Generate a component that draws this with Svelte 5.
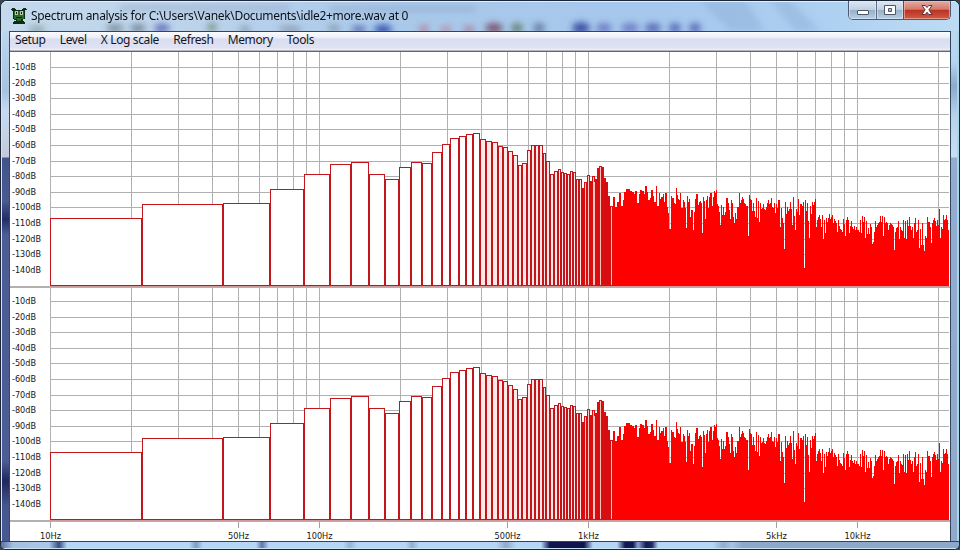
<script lang="ts">
  const menu = ["Setup", "Level", "X Log scale", "Refresh", "Memory", "Tools"];
  const channels = [0, 234];
  const levels = [10, 20, 30, 40, 50, 60, 70, 80, 90, 100, 110, 120, 130, 140];
  const freqLabels = [
    { f: 10, text: "10Hz", w: 21 },
    { f: 50, text: "50Hz", w: 21 },
    { f: 100, text: "100Hz", w: 26 },
    { f: 500, text: "500Hz", w: 26 },
    { f: 1000, text: "1kHz", w: 21 },
    { f: 5000, text: "5kHz", w: 21 },
    { f: 10000, text: "10kHz", w: 26 },
  ];

  // log scale, 269px per decade
  function fx(f: number) {
    return Math.floor(50.3 + 269 * Math.log10(f / 10));
  }

  function ly(db: number) {
    return Math.floor(51.9 + db * 1.56);
  }

  const gridX: number[] = [];
  for (let dec = 10; dec <= 10000; dec *= 10) {
    for (let i = 1; i < 10; i++) {
      if (dec * i <= 20000) gridX.push(fx(dec * i));
    }
  }

  // [left edge, top] of every bin that is wide enough for an outline
  const bins = [
    [50, 218], [142, 204], [223, 203], [270, 189], [304, 174], [330, 164], [351, 162], [369, 174],
    [385, 179], [399, 167], [411, 162], [422, 163], [432, 152], [442, 144], [450, 138], [459, 136],
    [466, 134], [473, 133], [480, 139], [486, 141], [492, 142], [498, 146], [503, 147], [508, 151],
    [513, 155], [518, 165], [522, 163], [527, 150], [531, 145], [535, 145], [539, 145], [543, 153],
    [546, 161], [550, 174], [554, 171], [558, 169], [561, 172], [564, 173], [567, 174], [570, 171],
    [573, 172], [576, 179], [579, 179], [582, 188], [584, 182], [587, 175], [590, 181], [592, 176],
    [595, 179], [597, 168], [599, 166], [602, 167], [604, 178], [606, 182], [608, 196], [610, 206],
    [613, 197],
  ];

  // one top per pixel column from x = 613
  const noise = [
    197, 197, 207, 207, 202, 202, 193, 193, 206, 206, 200, 192, 192, 189, 189, 189, 189, 191, 191, 192,
    192, 194, 191, 191, 203, 203, 194, 190, 190, 191, 191, 194, 186, 186, 192, 200, 200, 198, 190, 190,
    196, 202, 202, 186, 206, 206, 193, 199, 197, 197, 194, 202, 193, 193, 207, 213, 229, 229, 196, 198,
    198, 203, 204, 188, 195, 199, 200, 193, 208, 208, 200, 202, 208, 228, 196, 202, 199, 217, 210, 210,
    230, 212, 199, 194, 194, 205, 202, 201, 203, 233, 197, 201, 219, 200, 196, 208, 197, 193, 193, 206,
    197, 191, 193, 190, 204, 206, 212, 225, 205, 215, 207, 215, 212, 198, 198, 203, 210, 219, 200, 203,
    217, 223, 213, 219, 207, 207, 193, 203, 200, 197, 199, 203, 204, 206, 206, 236, 195, 199, 200, 211,
    203, 211, 217, 198, 218, 201, 222, 203, 209, 208, 204, 209, 210, 207, 203, 200, 204, 203, 198, 207,
    208, 203, 213, 204, 208, 200, 200, 227, 208, 218, 223, 249, 202, 214, 207, 211, 209, 202, 209, 225,
    197, 216, 230, 209, 212, 199, 215, 204, 204, 206, 202, 268, 200, 211, 203, 221, 238, 206, 214, 202,
    205, 202, 199, 227, 220, 217, 215, 219, 227, 215, 239, 220, 233, 218, 222, 218, 214, 219, 217, 215,
    223, 219, 221, 223, 232, 220, 226, 229, 230, 232, 219, 224, 236, 220, 217, 220, 233, 226, 221, 227,
    229, 226, 230, 227, 230, 230, 232, 220, 233, 216, 222, 217, 238, 221, 234, 228, 234, 224, 227, 244,
    242, 232, 221, 227, 225, 223, 222, 216, 222, 216, 236, 217, 223, 222, 223, 230, 225, 223, 224, 225,
    227, 250, 232, 228, 227, 221, 239, 227, 230, 231, 220, 238, 221, 239, 220, 226, 217, 226, 230, 227,
    238, 223, 218, 232, 230, 220, 248, 229, 245, 223, 245, 251, 236, 238, 217, 222, 222, 227, 243, 223,
    220, 218, 221, 226, 220, 225, 209, 238, 227, 229, 215, 220, 219, 215, 220, 230,
  ];
  const noisePath = "M613 286" + noise.map((y, i) => `V${y}H${Math.min(614 + i, 949)}`).join("") + "V286Z";
</script>

<div class="window">
  <div class="titlebar">
    <svg class="glass" width="958" height="30" viewBox="1 1 958 30">
      <defs>
        <linearGradient id="sky">
          <stop offset="0" stop-color="#c4d9ec" />
          <stop offset=".2" stop-color="#bdd3ea" />
          <stop offset=".42" stop-color="#a9c8ea" />
          <stop offset=".7" stop-color="#a6c8ed" />
          <stop offset=".85" stop-color="#add0f1" />
          <stop offset="1" stop-color="#bddbf4" />
        </linearGradient>
        <filter id="soft" x="-50%" y="-50%" width="200%" height="200%"><feGaussianBlur stdDeviation="3" /></filter>
      </defs>
      <rect width="960" height="31" fill="url(#sky)" />
      <g filter="url(#soft)">
        <path d="M700 0h45l20 31h-35zM770 0h20l30 31h-25z" fill="#8fb0d7" opacity=".5" />
        <path d="M120 6h170v4H120zM330 7h145v4H330z" fill="#869fc1" opacity=".6" />
        <g opacity=".8">
          <ellipse cx="37" cy="29" rx="9" ry="3" fill="#7f969d" />
          <ellipse cx="115" cy="28" rx="9" ry="4" fill="#71858f" />
          <ellipse cx="138" cy="28" rx="8" ry="4" fill="#67788b" />
          <ellipse cx="162" cy="28" rx="8" ry="4" fill="#4a56b3" />
          <ellipse cx="212" cy="27" rx="5" ry="4" fill="#6b8774" />
          <ellipse cx="245" cy="29" rx="6" ry="3" fill="#7f91a1" />
          <ellipse cx="290" cy="29" rx="12" ry="3" fill="#8190a5" />
          <ellipse cx="334" cy="28" rx="6" ry="3" fill="#778a98" />
          <ellipse cx="359" cy="29" rx="8" ry="3" fill="#40519c" />
          <ellipse cx="383" cy="29" rx="9" ry="4" fill="#15309b" />
          <ellipse cx="424" cy="29" rx="5" ry="4" fill="#b97790" />
          <ellipse cx="446" cy="29" rx="6" ry="3" fill="#bd7f94" />
          <ellipse cx="469" cy="29" rx="6" ry="3" fill="#ae6f85" />
          <ellipse cx="494" cy="28" rx="9" ry="5" fill="#743f55" />
          <ellipse cx="517" cy="28" rx="6" ry="5" fill="#5c7760" />
          <ellipse cx="539" cy="28" rx="6" ry="5" fill="#5a7190" />
          <ellipse cx="581" cy="28" rx="9" ry="6" fill="#2b3797" />
          <ellipse cx="604" cy="28" rx="8" ry="5" fill="#6671c1" />
          <ellipse cx="630" cy="28" rx="9" ry="5" fill="#6771c1" />
          <ellipse cx="653" cy="28" rx="8" ry="5" fill="#4d59ae" />
          <ellipse cx="675" cy="28" rx="6" ry="5" fill="#4957b1" />
          <ellipse cx="695" cy="28" rx="6" ry="5" fill="#4956ad" />
        </g>
      </g>
      <path d="M0 1.5h960" stroke="#e4f1fb" />
    </svg>
    <svg class="app-icon" width="16" height="16" viewBox="0 0 16 16">
      <path d="M1 0h2v1h2v1h6V1h2V0h2v2h-1v9h-2v2h1v1h1v2H2v-2h1v-1h2v-1H3v-1H2V3H1z" fill="#102b14" />
      <path d="M3 3h10v8H3zM6 11h4v2H6z" fill="#28682b" />
      <path d="M4 3h3v4H4zM9 3h3v4H9z" fill="#b9c7ad" />
      <path d="M5 4h1v2H5zM10 4h1v2h-1zM5 9h6v1H5z" fill="#10210f" />
      <path d="M0 1h1v1H0zM3 0h1v1H3zM12 0h1v1h-1zM15 1h1v1h-1z" fill="#26302b" />
    </svg>
    <span class="title">Spectrum analysis for C:\Users\Vanek\Documents\idle2+more.wav at 0</span>
    <div class="controls">
      <button class="ctl min" aria-label="Minimize">
        <svg width="14" height="12" viewBox="0 0 14 12"><rect x="1.5" y="6.5" width="11" height="4" rx=".5" fill="#fff" stroke="#4c5668" /></svg>
      </button>
      <button class="ctl max" aria-label="Maximize">
        <svg width="14" height="12" viewBox="0 0 14 12"><path d="M1.500 1.500h11v9h-11zM5.500 4.500v3h3v-3z" fill="#fff" fill-rule="evenodd" stroke="#4c5668" /></svg>
      </button>
      <button class="ctl close" aria-label="Close">
        <svg width="14" height="12" viewBox="0 0 14 12"><path d="M2 1.500h3.300l1.700 2 1.700-2H12L8.900 5.800 12 10.500H8.700L7 8.200l-1.700 2.300H2l3.100-4.700z" fill="#fff" stroke="#5f3239" /></svg>
      </button>
    </div>
  </div>

  <div class="body">
    <div class="side left"></div>
    <div class="client">
      <nav class="menu">
        {#each menu as item}
          <span>{item}</span>
        {/each}
      </nav>
      <svg class="plot" width="940" height="490" viewBox="10 51 940 490" shape-rendering="crispEdges">
        <rect x="10" y="51" width="940" height="490" fill="#fff" />
        <rect x="10" y="51" width="940" height="1" fill="#686868" />
        {#each channels as dy}
          <g transform="translate(0 {dy})">
            {#each gridX as x}
              <rect {x} y={dy ? 54 : 52} width="1" height={dy ? 232 : 234} fill="#b0b0b0" />
            {/each}
            {#each levels as db}
              <rect x="50" y={ly(db)} width="899" height="1" fill="#b0b0b0" />
              <text class="tick" x="12" y={ly(db) + 3} textLength={db < 100 ? 24 : 29} lengthAdjust="spacingAndGlyphs">-{db}dB</text>
            {/each}
            <rect x="10" y="286" width="940" height="2" fill="#b4b0b0" />
            <rect x="50" y="286" width="899" height="1" fill="#cf9a9a" />
            {#each bins.slice(0, -1) as [x, y], i}
              <rect x={x + 0.5} y={y + 0.5} width={bins[i + 1][0] - x - 1} height={285 - y} class="bin" class:narrow={x > 479} class:thin={x > 581} />
            {/each}
            <path d={noisePath} fill="#f00" />
            <path d="M594 182h1v103h-1zM600 167h1v118h-1zM611 207h1v78h-1z" fill="#ffc4bc" />
          </g>
        {/each}
        {#each freqLabels as l}
          <rect x={fx(l.f)} y="522" width="1" height="6" fill="#a0a0a0" />
          <text class="tick" x={fx(l.f) + 0.5 - l.w / 2} y="539" textLength={l.w} lengthAdjust="spacingAndGlyphs">{l.text}</text>
        {/each}
      </svg>
    </div>
    <div class="side right"></div>
  </div>
  <div class="bottom"></div>
</div>

<style>
  :global(body) {
    margin: 0;
    background: #39434f;
    overflow: hidden;
  }
  .window {
    box-sizing: border-box;
    width: 960px;
    height: 550px;
    display: flex;
    flex-direction: column;
    border: 1px solid #1a2638;
    border-radius: 7px 7px 6px 6px;
    overflow: hidden;
    background: #b5d4f2;
  }
  .titlebar {
    position: relative;
    flex: none;
    height: 30px;
    display: flex;
    align-items: flex-start;
    padding-left: 10px;
  }
  .glass {
    position: absolute;
    left: 0;
    top: 0;
  }
  .app-icon {
    position: relative;
    margin: 7px 4px 0 0;
    shape-rendering: crispEdges;
  }
  .title {
    position: relative;
    font: 12px/16px "Noto Sans", "Open Sans", sans-serif;
    letter-spacing: -0.32px;
    color: #0b1018;
    margin-top: 7px;
    white-space: nowrap;
  }
  .controls {
    position: relative;
    display: flex;
    margin: 0 8px 0 auto;
    height: 18px;
    border: 1px solid #4b5a70;
    border-top: 0;
    border-radius: 0 0 5px 5px;
    overflow: hidden;
  }
  .ctl {
    box-sizing: border-box;
    padding: 0;
    border: 0;
    display: flex;
    align-items: center;
    justify-content: center;
    background: linear-gradient(#dce7f2 0, #c0d0e2 48%, #98afc9 52%, #b7d0e6 100%);
    box-shadow: inset 0 0 0 1px #e3edf699;
  }
  .min {
    width: 28px;
    border-right: 1px solid #5c6c82;
  }
  .max {
    width: 27px;
    border-right: 1px solid #5c4858;
  }
  .close {
    width: 46px;
    background: linear-gradient(#e7aba0 0, #d4796b 46%, #b93322 52%, #d25b42 100%);
    box-shadow: inset 0 0 0 1px #f4c4b899;
  }
  .body {
    flex: none;
    display: flex;
    height: 510px;
  }
  .side {
    box-sizing: border-box;
    flex: none;
    width: 9px;
  }
  .left {
    border-left: 1px solid #d6e6f5;
    border-right: 1px solid #39496a;
    background: linear-gradient(#bdd7ee 0, #a8c3df 60px, #c5dbf1 80px, #c4c8da 126px, #41548a 127px, #4b5b91 170px, #232c66 188px, #4c5d95 204px, #4c5d95 430px, #20285c 450px, #465690 475px, #485990 510px);
  }
  .right {
    border-left: 1px solid #314760;
    border-right: 2px solid #a9d6e8;
    background: linear-gradient(#bcd9f2 0, #b8d5ef 30px, #8da9cc 55px, #b9d2eb 85px, #c7dff3 126px, #93acd0 127px, #92a9cb 510px);
  }
  .client {
    flex: none;
    width: 940px;
    display: flex;
    flex-direction: column;
  }
  .menu {
    box-sizing: border-box;
    height: 20px;
    flex: none;
    display: flex;
    gap: 14.2px;
    padding-left: 5px;
    border-top: 1px solid #34465f;
    border-bottom: 1px solid #b5b5b9;
    background: linear-gradient(#fbfcfe 0, #eceff8 30%, #d9deef 40%, #dfe2f3 90%, #f5f5f8 100%);
    font: 12px/16px "Noto Sans", "Open Sans", sans-serif;
    letter-spacing: -0.38px;
    color: #15151c;
  }
  .plot {
    display: block;
    flex: none;
  }
  .tick {
    font: 9.5px "DejaVu Sans Condensed", "DejaVu Sans", sans-serif;
    fill: #151515;
  }
  .bin {
    fill: #fff;
    stroke: #c3151c;
    stroke-width: 1;
  }
  .narrow {
    fill: #ffe8e5;
  }
  .thin {
    fill: #ffc4be;
    stroke: #d80d10;
  }
  .bottom {
    box-sizing: border-box;
    flex: 1;
    border-top: 1px solid #2b4460;
    border-bottom: 1px solid #c6e6f3;
    background: linear-gradient(90deg, #5e6f9f 0, #a5bfe0 12px, #a9c8ea 48px, #3c4b85 58px, #b5d6f6 66px, #b5d6f6 188px, #7f9ac8 195px, #b5d6f6 202px, #b5d6f6 255px, #6076aa 261px, #b5d6f6 268px, #b5d6f6 342px, #96b4da 349px, #b5d6f6 356px, #b5d6f6 405px, #93aed0 411px, #b5d6f6 418px, #b5d6f6 495px, #8faacf 505px, #b5d6f6 515px, #b5d6f6 540px, #10144f 549px, #10144f 583px, #b5d6f6 592px, #b5d6f6 616px, #131955 624px, #131955 632px, #8ba3d0 637px, #151a58 645px, #202863 651px, #b5d6f6 657px, #b5d6f6 712px, #93adcf 722px, #a6c2e4 731px, #8ea8c9 742px, #8ea8c9 958px);
  }
</style>
